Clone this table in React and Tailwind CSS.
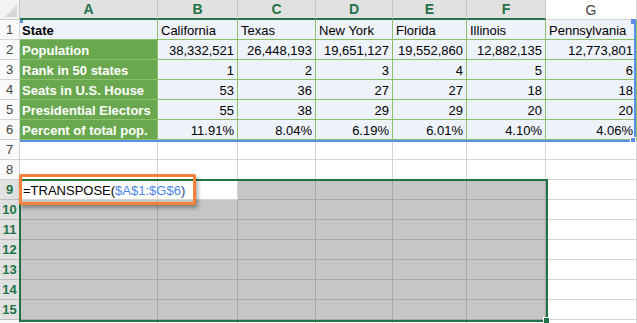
import React from 'react';

const widths = [138, 80, 78, 77, 74, 79, 91];
const letters = ['A', 'B', 'C', 'D', 'E', 'F', 'G'];

const table = [
  ['State', 'California', 'Texas', 'New York', 'Florida', 'Illinois', 'Pennsylvania'],
  ['Population', '38,332,521', '26,448,193', '19,651,127', '19,552,860', '12,882,135', '12,773,801'],
  ['Rank in 50 states', '1', '2', '3', '4', '5', '6'],
  ['Seats in U.S. House', '53', '36', '27', '27', '18', '18'],
  ['Presidential Electors', '55', '38', '29', '29', '20', '20'],
  ['Percent of total pop.', '11.91%', '8.04%', '6.19%', '6.01%', '4.10%', '4.06%'],
];

const RowHead = ({ n, selected }) => (
  <div
    className={`w-[20px] h-[20px] shrink-0 flex items-center justify-center border-r border-b text-[13px] ${
      selected
        ? 'bg-[#e1e1e1] border-[#bdbdbd] text-[#217346] font-bold'
        : 'bg-[#fafafa] border-[#d4d4d4] text-[#444]'
    }`}
  >
    {n}
  </div>
);

const DataRow = ({ r, cells }) => (
  <div className="flex">
    <RowHead n={r + 1} />
    {cells.map((c, i) => {
      const w = widths[i];
      if (i === 0) {
        return (
          <div
            key={i}
            style={{ width: w }}
            className={`h-[20px] shrink-0 border-r border-b border-[#8cbf6a] px-[2px] pt-[1px] flex items-center font-bold whitespace-nowrap ${
              r === 0 ? 'bg-[#eef2fb] text-black' : 'bg-[#6aa84f] text-white'
            }`}
          >
            {c}
          </div>
        );
      }
      return (
        <div
          key={i}
          style={{ width: w }}
          className={`h-[20px] shrink-0 border-r border-b border-[#8cbf6a] bg-[#eef2fb] px-[3px] pt-[1px] flex items-center whitespace-nowrap text-black ${
            r === 0 ? 'justify-start' : 'justify-end'
          }`}
        >
          {c}
        </div>
      );
    })}
  </div>
);

const EmptyRow = ({ n, gray, edit, head }) => (
  <div className="flex">
    <RowHead n={n} selected={head} />
    {widths.map((w, i) => {
      const isGray = gray && i < 6 && !(edit && i < 2);
      return (
        <div
          key={i}
          style={{ width: w }}
          className={`h-[20px] shrink-0 border-r border-b flex items-center whitespace-nowrap ${
            isGray ? 'bg-[#c6c6c6] border-[#a6a6a6]' : 'bg-white border-[#d4d4d4]'
          }`}
        >
          {edit && i === 0 && (
            <span className="pl-[3px] pt-[1px] text-black relative z-10">
              =TRANSPOSE(<span className="text-[#4a86e8]">$A$1:$G$6</span>
              <span className="text-[#1f3f8a]">)</span>
            </span>
          )}
        </div>
      );
    })}
  </div>
);

export default function App() {
  return (
    <div
      className="relative w-[637px] h-[323px] overflow-hidden bg-white text-[13px] leading-none"
      style={{ fontFamily: '"Liberation Sans", Arial, sans-serif' }}
    >
      {/* column headers */}
      <div className="flex">
        <div className="w-[20px] h-[20px] shrink-0 bg-[#f3f3f3] border-r border-b border-[#c8c8c8] relative">
          <svg className="absolute right-[2px] bottom-[2px]" width="12" height="12" viewBox="0 0 12 12">
            <polygon points="12,0 12,12 0,12" fill="#d6d6d6" />
          </svg>
        </div>
        {letters.map((l, i) => (
          <div
            key={l}
            style={{ width: widths[i] }}
            className={`h-[20px] shrink-0 flex items-center justify-center border-r text-[14px] ${
              i < 6
                ? 'bg-[#e1e1e1] border-[#c3c3c3] border-b-2 border-b-[#217346] text-[#217346] font-bold'
                : 'bg-white border-[#d4d4d4] border-b border-b-[#d4d4d4] text-[#444]'
            }`}
          >
            {l}
          </div>
        ))}
      </div>

      {table.map((cells, r) => (
        <DataRow key={r} r={r} cells={cells} />
      ))}

      <EmptyRow n={7} />
      <EmptyRow n={8} />
      <EmptyRow n={9} gray edit head />
      {[10, 11, 12, 13, 14, 15].map((n) => (
        <EmptyRow key={n} n={n} gray head />
      ))}
      <EmptyRow n="" />

      {/* blue reference range A1:G6 */}
      <div className="absolute left-[20px] top-[20px] w-[616px] h-[122px] border-r-2 border-b-2 border-[#5b8fe8] pointer-events-none" />
      <div className="absolute left-[20px] top-[20px] w-[3px] h-[3px] bg-[#5b8fe8]" />
      <div className="absolute left-[631px] top-[19px] w-[5px] h-[5px] bg-[#5b8fe8]" />
      <div className="absolute left-[630px] top-[137px] w-[6px] h-[6px] bg-[#5b8fe8] border border-white" />

      {/* green selection A9:F15 */}
      <div className="absolute left-[19px] top-[179px] w-[529px] h-[143px] border-2 border-[#217346] pointer-events-none" />
      <div className="absolute left-[543px] top-[317px] w-[7px] h-[7px] bg-[#217346] border border-white" />

      {/* orange callout */}
      <div className="absolute left-[19px] top-[174px] w-[177px] h-[31px] border-[3px] border-[#f4803a] rounded-[2px] shadow-[2px_3px_4px_rgba(0,0,0,0.35)] pointer-events-none" />
    </div>
  );
}
